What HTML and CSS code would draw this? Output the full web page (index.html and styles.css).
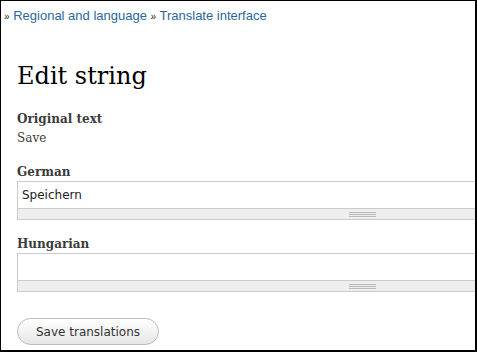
FILE: index.html
```html
<!DOCTYPE html>
<html lang="en">
<head>
  <meta charset="UTF-8" />
  <title>Edit string</title>
  <link rel="stylesheet" href="styles.css">
</head>
<body>
  <div class="frame">
    <div class="breadcrumb">
      <span class="raquo">»</span> <a href="#">Regional and language</a>
      <span class="raquo">»</span> <a href="#">Translate interface</a>
    </div>
    <h1>Edit string</h1>
    <div class="form-item first">
      <label>Original text</label>
      <div class="original">Save</div>
    </div>
    <div class="form-item german">
      <label>German</label>
      <div class="resizable">
        <textarea>Speichern</textarea>
        <div class="grippie"><span></span></div>
      </div>
    </div>
    <div class="form-item">
      <label>Hungarian</label>
      <div class="resizable">
        <textarea></textarea>
        <div class="grippie"><span></span></div>
      </div>
    </div>
    <button class="submit">Save translations</button>
  </div>
</body>
</html>
```

FILE: styles.css
```css
body {
  margin: 0;
  background: #fff;
}
.frame {
  box-sizing: border-box;
  width: 477px;
  height: 352px;
  overflow: hidden;
  border-style: solid;
  border-color: #000;
  border-width: 1px 2px 2px 1px;
  font-family: "DejaVu Serif", Georgia, serif;
  color: #3b3b3b;
}
.breadcrumb {
  padding: 7px 0 0 3px;
  font-family: "Liberation Sans", Arial, sans-serif;
  font-size: 13px;
  line-height: 16px;
}
.breadcrumb a {
  color: #2a679c;
  text-decoration: none;
}
.raquo {
  color: #222;
  font-size: 10px;
}
h1 {
  margin: 36px 0 0 16px;
  font-size: 24px;
  font-weight: normal;
  line-height: 30px;
  color: #000;
}
.form-item {
  margin: 16px 0 0 16px;
  font-size: 12px;
  line-height: 18px;
}
.form-item.first {
  margin-top: 20px;
}
.form-item.german {
  margin-top: 17px;
}
.form-item label {
  display: block;
  font-weight: bold;
  line-height: 16px;
}
.original {
  margin-top: 2px;
}
.resizable {
  width: 691px;
  margin-top: 1px;
}
.resizable textarea {
  display: block;
  box-sizing: border-box;
  width: 100%;
  height: 28px;
  margin: 0;
  padding: 5px 4px 3px;
  border: 1px solid #ccc;
  resize: none;
  font-family: "DejaVu Sans", "Lucida Grande", sans-serif;
  font-size: 12px;
  line-height: 16px;
  color: #222;
  overflow: hidden;
}
.grippie {
  box-sizing: border-box;
  height: 11px;
  background: #eee;
  border: 1px solid #ccc;
  border-top: none;
  display: flex;
  justify-content: center;
  align-items: center;
}
.grippie span {
  width: 27px;
  height: 5px;
  background: repeating-linear-gradient(#bbb 0 1px, transparent 1px 2px);
}
.submit {
  margin: 26px 0 0 16px;
  box-sizing: border-box;
  width: 142px;
  height: 27px;
  padding: 0;
  border: 1px solid #bbb;
  border-radius: 14px;
  background: linear-gradient(#fff, #e6e6e6);
  font-family: "DejaVu Sans", "Lucida Grande", sans-serif;
  font-size: 12px;
  color: #333;
}
```
